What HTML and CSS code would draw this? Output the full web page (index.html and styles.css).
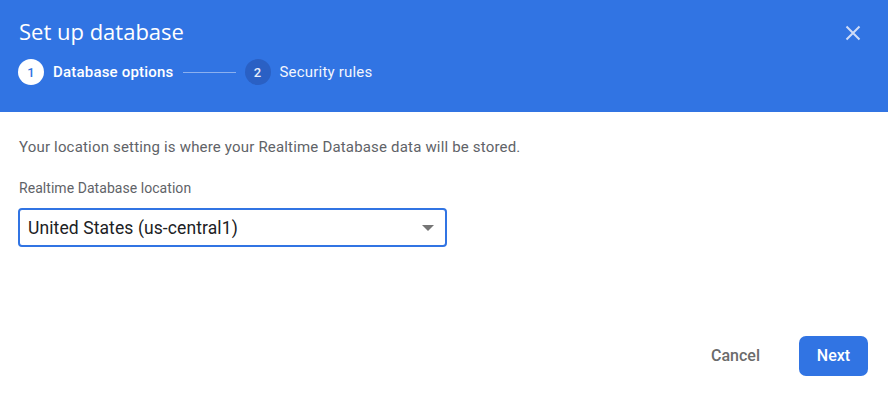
FILE: index.html
```html
<!DOCTYPE html>
<html>
<head>
<meta charset="utf-8">
<link rel="stylesheet" href="styles.css">
</head>
<body>
<div class="dialog">
  <header class="header">
    <div class="title-row">
      <h1 class="title">Set up database</h1>
      <button class="close" aria-label="Close">
        <svg width="16" height="16" viewBox="0 0 16 16"><path d="M1.5 1.5L14.5 14.5M14.5 1.5L1.5 14.5" stroke="#cfdcf7" stroke-width="2" fill="none"/></svg>
      </button>
    </div>
    <div class="stepper">
      <div class="step active"><span class="num">1</span><span class="label">Database options</span></div>
      <div class="connector"></div>
      <div class="step"><span class="num">2</span><span class="label">Security rules</span></div>
    </div>
  </header>
  <main class="content">
    <p class="desc">Your location setting is where your Realtime Database data will be stored.</p>
    <label class="field-label">Realtime Database location</label>
    <div class="select">
      <span class="value">United States (us-central1)</span>
      <svg width="12" height="6" viewBox="0 0 12 6"><path d="M0 0L12 0L6 6Z" fill="#757575"/></svg>
    </div>
  </main>
  <footer class="actions">
    <button class="btn cancel">Cancel</button>
    <button class="btn next">Next</button>
  </footer>
</div>
</body>
</html>
```
FILE: styles.css
```css
* { box-sizing: border-box; }
html, body { margin: 0; padding: 0; }
body {
  width: 888px;
  height: 393px;
  background: #fff;
  font-family: Roboto, "Noto Sans", Arial, sans-serif;
  overflow: hidden;
}
.dialog { display: flex; flex-direction: column; height: 393px; }
.header {
  background: #3174e3;
  height: 112px;
  padding: 15px 19px 0 19px;
  color: #fff;
}
.title-row { display: flex; justify-content: space-between; align-items: flex-start; }
.title {
  margin: 0;
  font-family: "Open Sans", Roboto, sans-serif;
  font-weight: 400;
  font-size: 22px;
  line-height: 32px;
}
.close {
  background: none; border: none; padding: 0; margin: 10px 8px 0 0;
  width: 16px; height: 16px; display: flex; cursor: pointer;
}
.stepper { display: flex; align-items: center; margin-top: 12px; margin-left: -1px; }
.step { display: flex; align-items: center; gap: 9px; }
.num {
  width: 26px; height: 26px; border-radius: 50%;
  display: flex; align-items: center; justify-content: center;
  font-size: 13px; font-weight: 500;
  background: #2a60c4; color: #e8eefb;
}
.step.active .num { background: #fff; color: #3174e3; }
.label { font-size: 15px; letter-spacing: 0.2px; color: #f3f6fd; }
.step.active .label { font-weight: 500; color: #fff; }
.connector { width: 53px; height: 1px; background: #8bb0ef; margin: 0 9px 0 9px; }
.content { padding: 25px 19px 0 19px; flex: 1; }
.desc { margin: 0; font-size: 15px; letter-spacing: 0.18px; color: #5f6368; line-height: 20px; }
.field-label { display: block; margin-top: 21px; font-size: 14px; letter-spacing: 0.05px; color: #5f6368; line-height: 20px; }
.select {
  margin-top: 10px; margin-left: -1px;
  width: 429px; height: 39px;
  border: 2px solid #3174e3; border-radius: 4px;
  display: flex; align-items: center; justify-content: space-between;
  padding: 0 11px 0 8px;
}
.value { font-size: 17.5px; letter-spacing: 0.1px; color: #202124; }
.actions { display: flex; justify-content: flex-end; align-items: center; gap: 18px; padding: 0 20px 17px 0; }
.btn { font-family: Roboto, sans-serif; font-size: 16px; font-weight: 500; border: none; cursor: pointer; line-height: 1; }
.cancel { background: none; color: #6b6b6b; padding: 0 21px; height: 40px; }
.next { background: #3174e3; color: #fff; width: 69px; height: 40px; border-radius: 7px; }
```
